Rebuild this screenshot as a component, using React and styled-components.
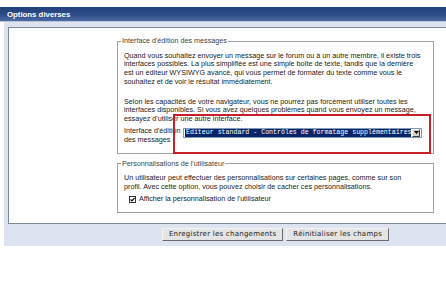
import React from 'react';
import styled, {createGlobalStyle} from 'styled-components';

// Global

const GlobalStyle = createGlobalStyle`
    html, body {
        margin: 0;
        padding: 0;
        background: #fff;
        overflow: hidden;
    }
`

// Styled Components

const Page = styled.div`
    position: relative;
    width: 547px;
    padding-top: 7px;
    font-family: "Liberation Sans", Arial, sans-serif;
    color: #222;
`

const Header = styled.div`
    height: 14px;
    display: flex;
    align-items: center;
    padding-left: 7px;
    background: linear-gradient(#223f78, #2f4f8b 60%, #4d6ba5);
    border-bottom: 1px solid #b9c4da;
    color: #fff;
    font-weight: bold;
    font-size: 7.8px;
`

const Body = styled.div`
    margin-left: 4px;
    background: #dde4ef;
    padding: 5px 4px 5px 4px;
`

const Box = styled.div`
    background: #fff;
    border: 1px solid #7d8a9c;
    padding: 9px 0 10px;
`

const Fieldset = styled.fieldset`
    box-sizing: border-box;
    width: 317px;
    margin: ${p => p.$first ? '0' : '6px'} auto 0;
    border: 1px solid #a3a3a3;
    padding: 6px 6px ${p => p.$pb}px 6px;
    font-size: 7.2px;
    line-height: 8.7px;
`

const Legend = styled.legend`
    padding: 0 1px;
    margin-left: -3px;
    color: #444;
`

const Text = styled.p`
    margin: 0 0 ${p => p.$mb || 0}px;
    white-space: nowrap;
`

const SelectRow = styled.div`
    display: flex;
    align-items: flex-start;
`

const Label = styled.div`
    width: 59px;
`

const Select = styled.div`
    display: flex;
    align-items: center;
    margin-top: 0.5px;
    height: 10px;
    width: 239px;
    box-sizing: border-box;
    border: 1px solid #7f9db9;
    background: #fff;
    padding: 0 1px;
`

const Selected = styled.span`
    flex: 1;
    height: 8px;
    background: #0a246a;
    color: #fff;
    font-family: "Liberation Mono", "Courier New", monospace;
    font-size: 6.6px;
    line-height: 8px;
    padding-left: 1px;
    white-space: nowrap;
    overflow: hidden;
`

const Arrow = styled.span`
    width: 8px;
    height: 8px;
    box-sizing: border-box;
    margin-left: 1px;
    background: #d4d0c8;
    border: 1px solid;
    border-color: #fff #404040 #404040 #fff;
    display: flex;
    align-items: center;
    justify-content: center;
`

const CheckRow = styled.label`
    display: flex;
    align-items: center;
    margin-top: 3.6px;
    gap: 3px;
    padding-left: 5px;
`

const Check = styled.span`
    width: 7px;
    height: 7px;
    box-sizing: border-box;
    border: 1px solid #333;
    background: #fff;
    display: flex;
    align-items: center;
    justify-content: center;
`

const Buttons = styled.div`
    display: flex;
    justify-content: center;
    gap: 3px;
    margin-top: 4px;
`

const Button = styled.button`
    height: 13px;
    padding: 0 6px;
    font-family: "DejaVu Sans", Verdana, sans-serif;
    font-size: 7px;
    letter-spacing: 0.25px;
    color: #222;
    background: #e4e4e4;
    border: 1px solid;
    border-color: #f4f4f4 #6b6b6b #6b6b6b #f4f4f4;
    line-height: 11px;
`

const Highlight = styled.div`
    position: absolute;
    left: 173px;
    top: 114px;
    width: 258px;
    height: 40px;
    box-sizing: border-box;
    border: 2px solid #c81e2c;
    pointer-events: none;
`

// Components

const App = () => {
    return (
        <Page>
            <GlobalStyle/>
            <Header>Options diverses</Header>
            <Body>
                <Box>
                    <Fieldset $first $pb={8}>
                        <Legend>Interface d'édition des messages</Legend>
                        <Text $mb={11}>
                            Quand vous souhaitez envoyer un message sur le forum ou à un autre membre, il existe trois<br/>
                            interfaces possibles. La plus simplifiée est une simple boîte de texte, tandis que la dernière<br/>
                            est un éditeur WYSIWYG avancé, qui vous permet de formater du texte comme vous le<br/>
                            souhaitez et de voir le résultat immédiatement.
                        </Text>
                        <Text $mb={3.5}>
                            Selon les capacités de votre navigateur, vous ne pourrez pas forcément utiliser toutes les<br/>
                            interfaces disponibles. Si vous avez quelques problèmes quand vous envoyez un message,<br/>
                            essayez d'utiliser une autre interface.
                        </Text>
                        <SelectRow>
                            <Label>Interface d'édition des messages</Label>
                            <Select>
                                <Selected>Éditeur standard - Contrôles de formatage supplémentaires</Selected>
                                <Arrow>
                                    <svg width="5" height="3" viewBox="0 0 5 3">
                                        <path d="M0 0h5L2.5 3z" fill="#000"/>
                                    </svg>
                                </Arrow>
                            </Select>
                        </SelectRow>
                    </Fieldset>
                    <Fieldset $pb={8}>
                        <Legend>Personnalisations de l'utilisateur</Legend>
                        <Text>
                            Un utilisateur peut effectuer des personnalisations sur certaines pages, comme sur son<br/>
                            profil. Avec cette option, vous pouvez choisir de cacher ces personnalisations.
                        </Text>
                        <CheckRow>
                            <Check>
                                <svg width="5" height="5" viewBox="0 0 5 5">
                                    <path d="M0.5 2.4l1.4 1.5L4.6 0.8" fill="none" stroke="#000" strokeWidth="1.1"/>
                                </svg>
                            </Check>
                            Afficher la personnalisation de l'utilisateur
                        </CheckRow>
                    </Fieldset>
                </Box>
                <Buttons>
                    <Button>Enregistrer les changements</Button>
                    <Button>Réinitialiser les champs</Button>
                </Buttons>
            </Body>
            <Highlight/>
        </Page>
    )
}

export default App;
